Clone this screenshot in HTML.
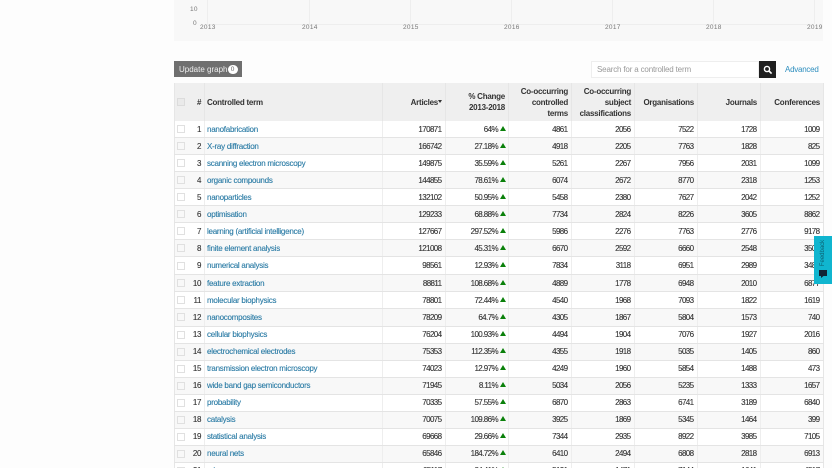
<!DOCTYPE html>
<html><head><meta charset="utf-8">
<style>
html,body{margin:0;padding:0;background:#fdfdfd;width:832px;height:468px;overflow:hidden;font-family:"Liberation Sans",sans-serif}
#w{position:relative;width:832px;height:468px;overflow:hidden;filter:blur(.35px)}
.a{position:absolute}
.y{font-size:6.5px;color:#777;letter-spacing:.3px}
.g{position:absolute;top:0;height:24px;width:1px;background:#eee}
table{position:absolute;left:174px;top:83px;width:649px;border-collapse:collapse;table-layout:fixed;font-size:8px;color:#333}
th{height:38px;background:#efefef;padding:0 3px;text-align:right;font-size:8px;letter-spacing:-.25px;line-height:11px;color:#333;border-left:1px solid #e6e6e6;font-weight:bold}
td{height:16.05px;padding:0 3.5px;text-align:right;letter-spacing:-.6px;border-left:1px solid #eee;border-bottom:1px solid #e4e4e4;white-space:nowrap;overflow:hidden;-webkit-text-stroke:.12px}
tr:nth-child(odd) td{background:#fff}
tr:nth-child(even) td{background:#f8f8f8}
tr:nth-child(9) td{height:17px}
td:nth-child(1),th:nth-child(1){border-left:1px solid #e6e6e6;padding:0}
td:nth-child(2),th:nth-child(2){border-left:0;padding:0 3px 0 0;letter-spacing:-.4px}
td:nth-child(3),th:nth-child(3){text-align:left;padding-left:2px}
td:nth-child(3){color:#2a7ba5;letter-spacing:-.25px}
td:nth-child(5){padding-right:2px}
td:last-child,th:last-child{border-right:1px solid #e6e6e6}
.c{display:block;box-sizing:border-box;width:8px;height:8px;border:1px solid #e0e0e0;background:#fff;margin-left:2px}
th .c{background:#eaeaea;border-color:#dcdcdc}
tr:nth-child(even) .c{background:#f8f8f8}
i{display:inline-block;width:0;height:0;border-left:3.5px solid transparent;border-right:3.5px solid transparent;border-bottom:5px solid #0a800a;margin-left:2px;vertical-align:1px}
</style></head><body><div id="w">
<div class="a" style="left:174px;top:0;width:649px;height:41px;background:#f8f8f8"></div>
<div class="a" style="left:207px;top:24px;width:604px;height:1px;background:#eee"></div>
<div class="g" style="left:207px"></div><div class="g" style="left:309px"></div><div class="g" style="left:410px"></div><div class="g" style="left:511px"></div><div class="g" style="left:612px"></div><div class="g" style="left:713px"></div><div class="g" style="left:814px"></div>
<div class="a y" style="left:190px;top:6px">10</div>
<div class="a y" style="left:193px;top:20px">0</div>
<div class="a y" style="left:200px;top:24px">2013</div>
<div class="a y" style="left:302px;top:24px">2014</div>
<div class="a y" style="left:403px;top:24px">2015</div>
<div class="a y" style="left:504px;top:24px">2016</div>
<div class="a y" style="left:605px;top:24px">2017</div>
<div class="a y" style="left:706px;top:24px">2018</div>
<div class="a y" style="left:807px;top:24px">2019</div>
<div class="a" style="left:174px;top:61px;width:68px;height:16px;background:#6f6f6f;color:#eee;font-size:8px;line-height:17px;text-indent:5px">Update graph<span class="a" style="left:53.5px;top:3.5px;width:10px;height:9px;border-radius:5px;background:#fff;color:#666;font-size:6.5px;line-height:9px;text-indent:0;text-align:center">0</span></div>
<div class="a" style="left:591px;top:61px;width:168px;height:17px;background:#fff;box-sizing:border-box;border:1px solid #eee;color:#999;font-size:8px;letter-spacing:-.17px;line-height:16px;text-indent:5px">Search for a controlled term</div>
<div class="a" style="left:759px;top:61px;width:17px;height:17px;background:#1f1f1f">
<svg width="17" height="17" viewBox="0 0 17 17"><circle cx="8" cy="8" r="2.6" fill="none" stroke="#fff" stroke-width="1.4"/><path d="M10 10l2.6 2.6" stroke="#fff" stroke-width="1.6"/></svg></div>
<div class="a" style="left:785px;top:64px;color:#2f8fbf;font-size:8px;letter-spacing:-.25px;line-height:11px">Advanced</div>
<table>
<colgroup><col style="width:18px"><col style="width:12px"><col style="width:178px"><col style="width:63px"><col style="width:63px"><col style="width:63px"><col style="width:63px"><col style="width:63px"><col style="width:63px"><col style="width:63px"></colgroup>
<thead><tr><th><span class="c"></span></th><th>#</th><th>Controlled term</th><th>Articles<span style="display:inline-block;width:0;height:0;border-left:2.5px solid transparent;border-right:2.5px solid transparent;border-top:3px solid #333;vertical-align:2px"></span></th><th>% Change<br>2013-2018</th><th>Co-occurring<br>controlled<br>terms</th><th>Co-occurring<br>subject<br>classifications</th><th>Organisations</th><th>Journals</th><th>Conferences</th></tr></thead>
<tbody>
<tr><td><span class="c"></span></td><td>1</td><td>nanofabrication</td><td>170871</td><td>64%<i></i></td><td>4861</td><td>2056</td><td>7522</td><td>1728</td><td>1009</td></tr>
<tr><td><span class="c"></span></td><td>2</td><td>X-ray diffraction</td><td>166742</td><td>27.18%<i></i></td><td>4918</td><td>2205</td><td>7763</td><td>1828</td><td>825</td></tr>
<tr><td><span class="c"></span></td><td>3</td><td>scanning electron microscopy</td><td>149875</td><td>35.59%<i></i></td><td>5261</td><td>2267</td><td>7956</td><td>2031</td><td>1099</td></tr>
<tr><td><span class="c"></span></td><td>4</td><td>organic compounds</td><td>144855</td><td>78.61%<i></i></td><td>6074</td><td>2672</td><td>8770</td><td>2318</td><td>1253</td></tr>
<tr><td><span class="c"></span></td><td>5</td><td>nanoparticles</td><td>132102</td><td>50.95%<i></i></td><td>5458</td><td>2380</td><td>7627</td><td>2042</td><td>1252</td></tr>
<tr><td><span class="c"></span></td><td>6</td><td>optimisation</td><td>129233</td><td>68.88%<i></i></td><td>7734</td><td>2824</td><td>8226</td><td>3605</td><td>8862</td></tr>
<tr><td><span class="c"></span></td><td>7</td><td>learning (artificial intelligence)</td><td>127667</td><td>297.52%<i></i></td><td>5986</td><td>2276</td><td>7763</td><td>2776</td><td>9178</td></tr>
<tr><td><span class="c"></span></td><td>8</td><td>finite element analysis</td><td>121008</td><td>45.31%<i></i></td><td>6670</td><td>2592</td><td>6660</td><td>2548</td><td>3506</td></tr>
<tr><td><span class="c"></span></td><td>9</td><td>numerical analysis</td><td>98561</td><td>12.93%<i></i></td><td>7834</td><td>3118</td><td>6951</td><td>2989</td><td>3486</td></tr>
<tr><td><span class="c"></span></td><td>10</td><td>feature extraction</td><td>88811</td><td>108.68%<i></i></td><td>4889</td><td>1778</td><td>6948</td><td>2010</td><td>6877</td></tr>
<tr><td><span class="c"></span></td><td>11</td><td>molecular biophysics</td><td>78801</td><td>72.44%<i></i></td><td>4540</td><td>1968</td><td>7093</td><td>1822</td><td>1619</td></tr>
<tr><td><span class="c"></span></td><td>12</td><td>nanocomposites</td><td>78209</td><td>64.7%<i></i></td><td>4305</td><td>1867</td><td>5804</td><td>1573</td><td>740</td></tr>
<tr><td><span class="c"></span></td><td>13</td><td>cellular biophysics</td><td>76204</td><td>100.93%<i></i></td><td>4494</td><td>1904</td><td>7076</td><td>1927</td><td>2016</td></tr>
<tr><td><span class="c"></span></td><td>14</td><td>electrochemical electrodes</td><td>75353</td><td>112.35%<i></i></td><td>4355</td><td>1918</td><td>5035</td><td>1405</td><td>860</td></tr>
<tr><td><span class="c"></span></td><td>15</td><td>transmission electron microscopy</td><td>74023</td><td>12.97%<i></i></td><td>4249</td><td>1960</td><td>5854</td><td>1488</td><td>473</td></tr>
<tr><td><span class="c"></span></td><td>16</td><td>wide band gap semiconductors</td><td>71945</td><td>8.11%<i></i></td><td>5034</td><td>2056</td><td>5235</td><td>1333</td><td>1657</td></tr>
<tr><td><span class="c"></span></td><td>17</td><td>probability</td><td>70335</td><td>57.55%<i></i></td><td>6870</td><td>2863</td><td>6741</td><td>3189</td><td>6840</td></tr>
<tr><td><span class="c"></span></td><td>18</td><td>catalysis</td><td>70075</td><td>109.86%<i></i></td><td>3925</td><td>1869</td><td>5345</td><td>1464</td><td>399</td></tr>
<tr><td><span class="c"></span></td><td>19</td><td>statistical analysis</td><td>69668</td><td>29.66%<i></i></td><td>7344</td><td>2935</td><td>8922</td><td>3985</td><td>7105</td></tr>
<tr><td><span class="c"></span></td><td>20</td><td>neural nets</td><td>65846</td><td>184.72%<i></i></td><td>6410</td><td>2494</td><td>6808</td><td>2818</td><td>6913</td></tr>
<tr><td><span class="c"></span></td><td>21</td><td>microprocessors</td><td>65117</td><td>84.41%<i></i></td><td>5131</td><td>1471</td><td>7144</td><td>1641</td><td>4517</td></tr>
</tbody></table>
<div class="a" style="left:814px;top:236px;width:18px;height:48px;background:#10b5cf">
<div class="a" style="left:-7px;top:12px;width:32px;height:10px;transform:rotate(-90deg);font-size:6px;line-height:10px;color:#0c5f70;text-align:center">Feedback</div>
<svg class="a" style="left:5px;top:34px" width="8" height="8" viewBox="0 0 8 8"><rect width="8" height="6" fill="#123"/><path d="M2 6V8L4.5 6" fill="#123"/></svg>
</div>
</div></body></html>
